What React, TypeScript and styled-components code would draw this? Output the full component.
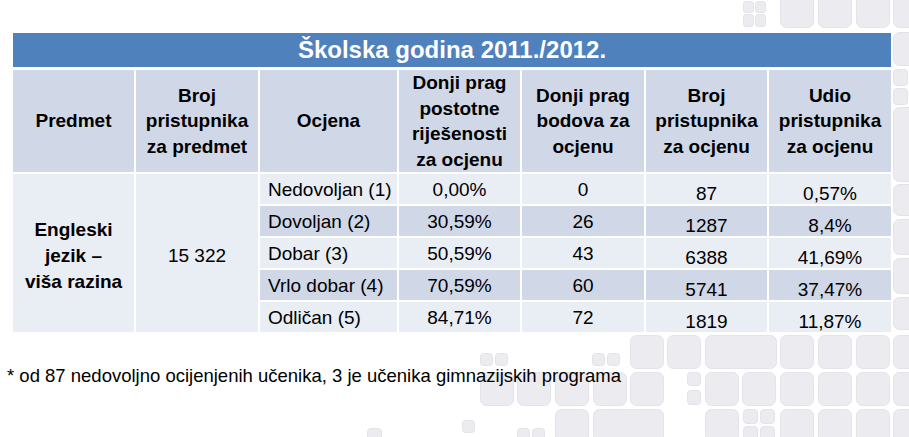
import React from "react";
import styled, { createGlobalStyle } from "styled-components";

const GlobalStyle = createGlobalStyle`
  html, body { margin: 0; padding: 0; background: #ffffff; }
  body { font-family: "Liberation Sans", Arial, sans-serif; color: #000; }
`;

const Page = styled.div`
  position: relative;
  width: 909px;
  height: 437px;
  overflow: hidden;
  background: #ffffff;
`;

const Backdrop = styled.svg`
  position: absolute;
  left: 0;
  top: 0;
  width: 909px;
  height: 437px;
  z-index: 0;
`;

const Content = styled.div`
  position: relative;
  z-index: 1;
  display: flex;
  flex-direction: column;
  padding: 31px 0 0 11px;
`;

const Table = styled.table`
  width: 880px;
  table-layout: fixed;
  border-collapse: collapse;
`;

const TitleCell = styled.th`
  height: 34px;
  padding: 0;
  background: #4f81bd;
  color: #ffffff;
  font-size: 24px;
  line-height: 28px;
  font-weight: 700;
  text-align: center;
  border: 2px solid #ffffff;
  border-bottom-width: 3px;
`;

const HeadCell = styled.th`
  height: 96px;
  padding: 0 3px;
  background: #d0d8e8;
  font-size: 19px;
  line-height: 25.5px;
  font-weight: 700;
  text-align: center;
  vertical-align: middle;
  border: 2px solid #ffffff;
`;

const BodyCell = styled.td<{ $shade?: boolean; $left?: boolean; $low?: boolean; $bold?: boolean }>`
  padding: ${(p) => (p.$low ? "10px 4px 0" : "6px 4px 4px")};
  padding-left: ${(p) => (p.$left ? "8px" : "4px")};
  background: ${(p) => (p.$shade ? "#d0d8e8" : "#e9edf4")};
  font-size: 19px;
  line-height: 20px;
  font-weight: ${(p) => (p.$bold ? 700 : 400)};
  text-align: ${(p) => (p.$left ? "left" : "center")};
  vertical-align: middle;
  white-space: nowrap;
  border: 2px solid #ffffff;
`;

const SpanCell = styled(BodyCell)`
  line-height: 26px;
  padding-top: 6px;
  padding-bottom: 0;
`;

const Footnote = styled.p`
  margin: 32px 0 0 -4px;
  font-size: 18.5px;
  line-height: 20px;
`;

type Tile = [number, number, number, number];

const tiles: Tile[] = [
  // top band
  [743, 1, 10, 11], [755, 1, 10, 11], [743, 14, 10, 12], [755, 14, 10, 12],
  [780, -6, 33, 33], [818, -6, 33, 33], [856, -6, 33, 33], [893, -6, 33, 33],
  // right column
  [893, 32, 30, 33], [893, 69, 14, 16], [893, 88, 14, 16], [893, 107, 30, 74],
  [893, 184, 30, 31], [893, 219, 30, 35], [893, 258, 30, 35], [893, 297, 30, 32],
  [893, 335, 30, 33], [893, 372, 30, 33], [893, 409, 30, 40],
  // bottom row 1
  [480, 353, 12, 12], [495, 353, 12, 12], [592, 353, 12, 12], [607, 353, 12, 12],
  [630, 335, 33, 33], [667, 335, 33, 33], [705, 335, 71, 33], [780, 335, 33, 33],
  [818, 335, 33, 33], [856, 335, 33, 33],
  // bottom row 2
  [480, 372, 33, 33], [517, 372, 33, 33], [555, 372, 33, 33], [593, 372, 33, 33],
  [630, 372, 33, 33], [687, 372, 13, 13], [687, 390, 13, 14], [705, 372, 33, 33],
  [742, 372, 33, 33], [780, 372, 33, 33], [818, 372, 33, 33], [856, 372, 33, 33],
  // bottom row 3
  [367, 428, 14, 14], [462, 420, 12, 12], [517, 428, 12, 12], [532, 428, 12, 12],
  [555, 409, 33, 33], [593, 409, 70, 33], [705, 409, 33, 33],
  [743, 409, 14, 14], [760, 409, 14, 14], [743, 426, 14, 14], [760, 426, 14, 14],
  [780, 409, 33, 33], [818, 409, 33, 33], [856, 409, 33, 33],
];

const rows = [
  { grade: "Nedovoljan (1)", pct: "0,00%", pts: "0", n: "87", share: "0,57%" },
  { grade: "Dovoljan (2)", pct: "30,59%", pts: "26", n: "1287", share: "8,4%" },
  { grade: "Dobar (3)", pct: "50,59%", pts: "43", n: "6388", share: "41,69%" },
  { grade: "Vrlo dobar (4)", pct: "70,59%", pts: "60", n: "5741", share: "37,47%" },
  { grade: "Odličan (5)", pct: "84,71%", pts: "72", n: "1819", share: "11,87%" },
];

const widths = [123, 124, 139, 123, 124, 123, 124];

export default function App() {
  return (
    <Page>
      <GlobalStyle />
      <Backdrop viewBox="0 0 909 437" aria-hidden="true">
        {tiles.map(([x, y, w, h], i) => (
          <rect
            key={i}
            x={x + 0.5}
            y={y + 0.5}
            width={w}
            height={h}
            rx={Math.min(6, w / 4)}
            fill="#ececf0"
            stroke="#e3e3e9"
            strokeWidth={1}
          />
        ))}
      </Backdrop>
      <Content>
        <Table>
          <colgroup>
            {widths.map((w, i) => (
              <col key={i} style={{ width: w }} />
            ))}
          </colgroup>
          <thead>
            <tr>
              <TitleCell colSpan={7}>Školska godina 2011./2012.</TitleCell>
            </tr>
            <tr>
              <HeadCell>Predmet</HeadCell>
              <HeadCell>Broj pristupnika za predmet</HeadCell>
              <HeadCell>Ocjena</HeadCell>
              <HeadCell>Donji prag postotne riješenosti za ocjenu</HeadCell>
              <HeadCell>Donji prag bodova za ocjenu</HeadCell>
              <HeadCell>Broj pristupnika za ocjenu</HeadCell>
              <HeadCell>Udio pristupnika za ocjenu</HeadCell>
            </tr>
          </thead>
          <tbody>
            {rows.map((r, i) => {
              const shade = i % 2 === 1;
              return (
                <tr key={r.grade}>
                  {i === 0 && (
                    <>
                      <SpanCell rowSpan={5} $bold>
                        Engleski
                        <br />
                        jezik –
                        <br />
                        viša razina
                      </SpanCell>
                      <SpanCell rowSpan={5}>15 322</SpanCell>
                    </>
                  )}
                  <BodyCell $shade={shade} $left>
                    {r.grade}
                  </BodyCell>
                  <BodyCell $shade={shade}>{r.pct}</BodyCell>
                  <BodyCell $shade={shade}>{r.pts}</BodyCell>
                  <BodyCell $shade={shade} $low>
                    {r.n}
                  </BodyCell>
                  <BodyCell $shade={shade} $low>
                    {r.share}
                  </BodyCell>
                </tr>
              );
            })}
          </tbody>
        </Table>
        <Footnote>* od 87 nedovoljno ocijenjenih učenika, 3 je učenika gimnazijskih programa</Footnote>
      </Content>
    </Page>
  );
}
